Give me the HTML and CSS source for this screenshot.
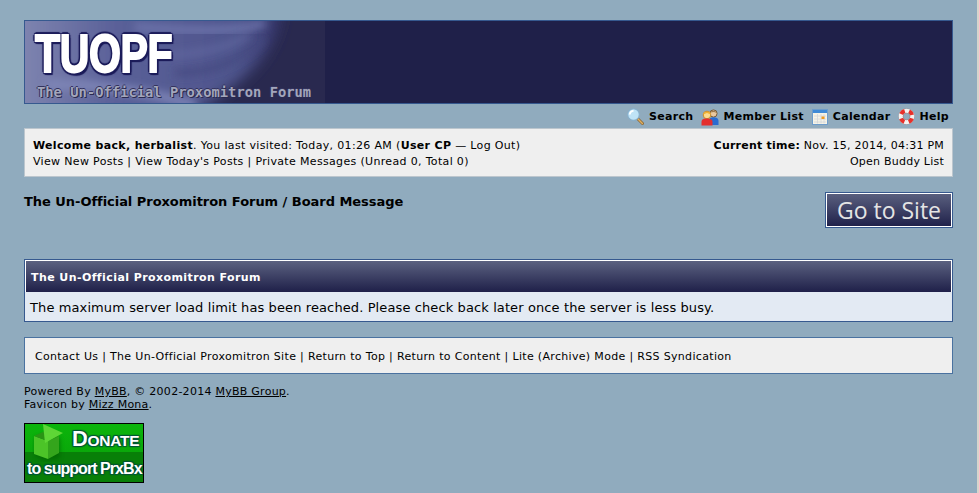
FILE: index.html
```html
<!DOCTYPE html>
<html lang="en">
<head>
<meta charset="utf-8">
<title>The Un-Official Proxomitron Forum</title>
<link rel="stylesheet" href="styles.css">
</head>
<body>
<div class="page">
  <header class="logo">
    <div class="banner">
      <svg class="swirl" width="300" height="82" viewBox="0 0 300 82" aria-hidden="true">
        <defs>
          <linearGradient id="fade" x1="0" y1="0" x2="1" y2="0">
            <stop offset="0" stop-color="#858bb4"/>
            <stop offset=".4" stop-color="#5a6098"/>
            <stop offset=".85" stop-color="#4e548c"/>
            <stop offset="1" stop-color="#34346a"/>
          </linearGradient>
          <filter id="soft" x="-20%" y="-20%" width="140%" height="140%"><feGaussianBlur stdDeviation="7"/></filter>
          <filter id="softer" x="-20%" y="-50%" width="140%" height="200%"><feGaussianBlur stdDeviation="4"/></filter>
          <clipPath id="bclip"><rect width="300" height="82"/></clipPath>
        </defs>
        <rect width="300" height="82" fill="#29294f"/>
        <g clip-path="url(#bclip)">
          <path d="M-20 -20H256C258 30 222 60 155 100H-20Z" fill="url(#fade)" filter="url(#soft)"/>
          <path d="M110 6C160 10 210 12 240 2" stroke="#7077ae" stroke-width="7" fill="none" filter="url(#softer)"/>
          <path d="M150 52C190 52 218 38 238 18" stroke="#454a80" stroke-width="6" fill="none" filter="url(#softer)"/>
          <path d="M120 34C165 36 200 28 225 14" stroke="#656ca4" stroke-width="4" fill="none" filter="url(#softer)"/>
          <path d="M20 64C70 62 120 70 170 84" stroke="#7f86b8" stroke-width="9" fill="none" filter="url(#softer)"/>
        </g>
      </svg>
      <span class="logo-mark">TUOPF</span>
      <span class="logo-sub">The Un-Official Proxomitron Forum</span>
    </div>
  </header>
  <nav class="menu">
    <a class="menu-item menu-search" href="#">
      <svg width="17" height="17" viewBox="0 0 17 17"><path d="M10.500 10.500l5 5" stroke="#8a6a3a" stroke-width="3" stroke-linecap="round"/><path d="M10.800 10.800l4.600 4.600" stroke="#e2b060" stroke-width="1.400" stroke-linecap="round"/><circle cx="6.500" cy="6.500" r="5.800" fill="#bfe3f6" stroke="#86aecb" stroke-width="1.100"/><path d="M2.800 6.500a3.700 3.700 0 0 1 3.700-3.700" stroke="#fff" stroke-width="1.800" fill="none"/></svg>
      <span>Search</span></a>
    <a class="menu-item menu-members" href="#">
      <svg width="18" height="18" viewBox="0 0 18 18"><circle cx="12.500" cy="5.500" r="3.600" fill="#e8c8a0" stroke="#7a5a35"/><path d="M9 4.500c1-2 5-3 7 .5l-3 -1z" fill="#a07a48"/><path d="M8 17v-4c0-3 2-3.800 4.500-3.800s5 1 5 3.800v4Z" fill="#2a6bd0"/><circle cx="6" cy="7" r="3.800" fill="#fbdc90" stroke="#c98a2a"/><path d="M2 6.500c.5-3 7-4 8 0l-4-1.500z" fill="#f0b030"/><path d="M.5 17.500v-3.500c0-3 2.500-3.500 5.500-3.500s5.500 .8 5.500 3.500v3.500Z" fill="#e32f2f"/></svg>
      <span>Member List</span></a>
    <a class="menu-item menu-calendar" href="#">
      <svg width="16" height="16" viewBox="0 0 16 16"><rect x=".5" y=".5" width="15" height="15" fill="#f6f3e6" stroke="#6d9ccb"/><rect x="1" y="1" width="14" height="3" fill="#3f8ad6"/><path d="M2 7h12M2 10h12M2 13h12M5.500 5v9.500M9 5v9.500M12 5v9.500" stroke="#d3d6da" stroke-width=".8"/><rect x="9.500" y="7.500" width="3" height="2.500" fill="#f09a20"/></svg>
      <span>Calendar</span></a>
    <a class="menu-item menu-help" href="#">
      <svg width="17" height="17" viewBox="0 0 17 17"><circle cx="8.500" cy="8.500" r="8" fill="#9a8a8a"/><circle cx="8.500" cy="8.500" r="5.700" fill="none" stroke="#f4f2f0" stroke-width="4.200"/><circle cx="8.500" cy="8.500" r="5.700" fill="none" stroke="#e8302a" stroke-width="4.200" stroke-dasharray="4.500 4.450" stroke-dashoffset="7"/><circle cx="8.500" cy="8.500" r="3.400" fill="#90abbe" stroke="#a08888" stroke-width=".6"/></svg>
      <span>Help</span></a>
  </nav>
  <section class="panel">
    <div class="panel-left">
      <div><strong>Welcome back, herbalist</strong>. You last visited: Today, 01:26 AM (<strong>User CP</strong> — <a href="#">Log Out</a>)</div>
      <div><a href="#">View New Posts</a> | <a href="#">View Today's Posts</a> | <a href="#">Private Messages</a> (Unread 0, Total 0)</div>
    </div>
    <div class="panel-right">
      <div><strong>Current time:</strong> Nov. 15, 2014, 04:31 PM</div>
      <div><a href="#">Open Buddy List</a></div>
    </div>
  </section>
  <div class="crumb-row">
    <h1 class="crumb">The Un-Official Proxomitron Forum / Board Message</h1>
    <a class="go-site" href="#">Go to Site</a>
  </div>
  <section class="message">
    <h2 class="thead">The Un-Official Proxomitron Forum</h2>
    <p class="trow">The maximum server load limit has been reached. Please check back later once the server is less busy.</p>
  </section>
  <footer class="links">
    <a href="#">Contact Us</a> | <a href="#">The Un-Official Proxomitron Site</a> | <a href="#">Return to Top</a> | <a href="#">Return to Content</a> | <a href="#">Lite (Archive) Mode</a> | <a href="#">RSS Syndication</a>
  </footer>
  <div class="credits">
    <div>Powered By <a href="#">MyBB</a>, © 2002-2014 <a href="#">MyBB Group</a>.</div>
    <div>Favicon by <a href="#">Mizz Mona</a>.</div>
  </div>
  <a class="donate" href="#">
    <svg class="donate-box" width="34" height="38" viewBox="0 0 34 38" aria-hidden="true">
      <defs><filter id="dshadow" x="-30%" y="-30%" width="160%" height="160%"><feGaussianBlur stdDeviation="2"/></filter></defs>
      <path d="M3 14L14 10L28 14V34L14 37L3 32Z" fill="#056005" opacity=".6" filter="url(#dshadow)"/>
      <path d="M2 12L16 17V35L2 30Z" fill="#4cc428"/>
      <path d="M16 17L27 12V29L16 35Z" fill="#34a51c"/>
      <path d="M2 12L11 8L27 12L16 17Z" fill="#2a9415"/>
      <path d="M11 0L31 9L13 19Z" fill="#5ed636"/>
    </svg>
    <span class="donate-top"><span class="big">D</span>ONATE</span>
    <span class="donate-bottom">to support PrxBx</span>
  </a>
</div>
</body>
</html>
```
FILE: styles.css
```css
html, body { margin: 0; padding: 0; }
body {
  background: #d8d4cc;
  font-family: "DejaVu Sans", Verdana, sans-serif;
  font-size: 11px;
  line-height: 14px;
  color: #000;
  height: 493px;
  overflow: hidden;
}
a { color: #000; text-decoration: none; }
.page {
  width: 977px;
  height: 493px;
  box-sizing: border-box;
  padding: 20px 24px 0;
  background: #90abbe;
  overflow: hidden;
}
.logo {
  width: 929px;
  height: 84px;
  box-sizing: border-box;
  border: 1px solid #36598f;
  background: #1f2049;
}
.banner { position: relative; width: 300px; height: 82px; }
.swirl { display: block; }
.logo-mark {
  position: absolute;
  left: 10px;
  top: 2px;
  font-family: "Liberation Sans", sans-serif;
  font-weight: 700;
  font-size: 54px;
  line-height: 60px;
  letter-spacing: -.5px;
  color: #fff;
  -webkit-text-stroke: 2px #fff;
  text-shadow: 3px 0 1px #1c1c5a, -3px 0 1px #1c1c5a, 0 3px 1px #1c1c5a, 0 -3px 1px #1c1c5a, 2px 2px 1px #1c1c5a, -2px 2px 1px #1c1c5a, 2px -2px 1px #1c1c5a, -2px -2px 1px #1c1c5a, 3px 3px 1px #1c1c5a;
  transform: scaleX(.76);
  transform-origin: left;
}
.logo-sub {
  position: absolute;
  left: 12px;
  top: 63px;
  font-family: "DejaVu Sans Mono", monospace;
  font-weight: 700;
  font-size: 13.750px;
  line-height: 16px;
  color: #a3a6bb;
  letter-spacing: .03px;
  text-shadow: 1px 1px 0 #2a2a50, -1px 0 0 #33335e, 0 -1px 0 #33335e;
  white-space: nowrap;
}
.menu {
  display: flex;
  justify-content: flex-end;
  align-items: center;
  height: 24px;
  box-sizing: border-box;
  padding: 1px 4px 0 0;
  letter-spacing: .3px;
}
.menu-item {
  display: flex;
  align-items: center;
  gap: 5px;
  font-weight: 700;
  font-size: 11px;
  white-space: nowrap;
  margin-left: 8px;
}
.menu-members, .menu-help { gap: 4px; }
.panel {
  display: flex;
  justify-content: space-between;
  box-sizing: border-box;
  height: 49px;
  padding: 9px 8px 0 8px;
  margin-bottom: 15px;
  background: #efefef;
  border: 1px solid #bcc6ce;
  line-height: 16px;
}
.panel-left { letter-spacing: .335px; }
.panel-right { text-align: right; letter-spacing: .23px; }
.crumb-row {
  display: flex;
  justify-content: space-between;
  align-items: flex-start;
  height: 67px;
}
.crumb {
  margin: 0;
  padding-top: 2px;
  font-size: 13px;
  line-height: 16px;
  font-weight: 700;
  letter-spacing: -.04px;
}
.go-site {
  width: 128px;
  height: 36px;
  box-sizing: border-box;
  border: 1px solid #36598f;
  outline: 1px solid #fff;
  outline-offset: -2px;
  background: linear-gradient(#5b6180, #1f2049);
  color: #e4e4e4;
  font-family: "Open Sans", sans-serif;
  font-size: 23px;
  line-height: 35px;
  text-align: center;
}
.message {
  box-sizing: border-box;
  border: 1px solid #36598f;
  background: #e3eaf3;
  height: 63px;
}
.thead {
  margin: 0;
  height: 32px;
  box-sizing: border-box;
  border: 1px solid #fff;
  border-bottom: 0;
  background: linear-gradient(#5b6180, #1f2049);
  color: #fff;
  font-size: 11px;
  line-height: 33px;
  padding-left: 5px;
  font-weight: 700;
  letter-spacing: .42px;
}
.trow {
  margin: 0;
  padding: 2px 0 0 5px;
  font-size: 13px;
  line-height: 27px;
  letter-spacing: .107px;
}
.links {
  box-sizing: border-box;
  height: 37px;
  margin-top: 15px;
  padding: 1px 0 0 10px;
  border: 1px solid #4a72a0;
  background: #efefef;
  line-height: 36px;
  letter-spacing: .325px;
}
.credits {
  margin-top: 11px;
  line-height: 13px;
  color: #000;
  letter-spacing: .26px;
}
.credits a { text-decoration: underline; }
.donate {
  display: block;
  position: relative;
  width: 120px;
  height: 60px;
  box-sizing: border-box;
  margin-top: 12px;
  border: 1px solid #000;
  background: linear-gradient(#0bb50b 0, #0aa80a 48%, #087f08 48%, #087f08 100%);
  overflow: hidden;
  color: #fff;
  font-family: "Liberation Sans", sans-serif;
  font-weight: 700;
}
.donate-box { position: absolute; left: 7px; top: 0; }
.donate-top {
  position: absolute;
  left: 47px;
  top: 3px;
  font-size: 15.500px;
  line-height: 24px;
  letter-spacing: -.3px;
  white-space: nowrap;
  text-shadow: 1px 1px 1px #053, -1px -1px 1px #053, 1px -1px 1px #053, -1px 1px 1px #053;
}
.donate-top .big { font-size: 22px; }
.donate-bottom {
  position: absolute;
  left: 2px;
  top: 35px;
  font-size: 16px;
  line-height: 20px;
  letter-spacing: -.95px;
  text-shadow: 1px 1px 1px #053, -1px -1px 1px #053, 1px -1px 1px #053, -1px 1px 1px #053;
  white-space: nowrap;
}
```
